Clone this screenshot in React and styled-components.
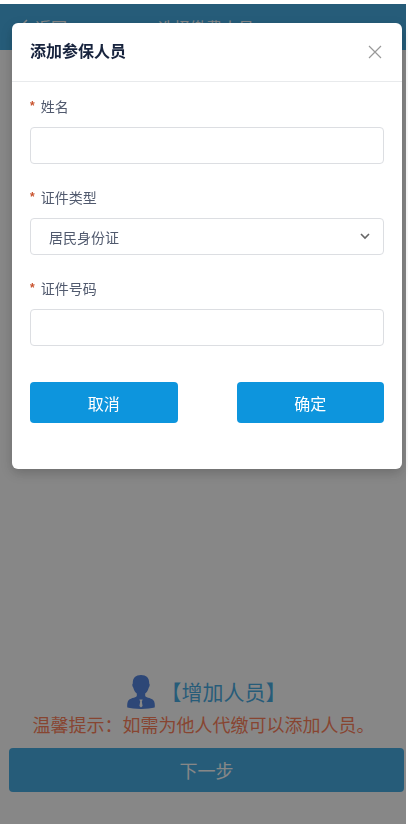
import React, { useState } from 'react';
import styled, { createGlobalStyle } from 'styled-components';

const GlobalStyle = createGlobalStyle`
  * {
    box-sizing: border-box;
  }
  body {
    margin: 0;
    background: #fff;
    color: #515a6e;
  }
  body, button, input, select {
    font-family: "Noto Sans CJK SC", sans-serif;
  }
`;

const Page = styled.div`
  display: flex;
  flex-direction: column;
  min-height: 100vh;
  padding: 4px 2px 0 0;
`;

const Header = styled.header`
  display: grid;
  grid-template-columns: 1fr auto 1fr;
  align-items: center;
  height: 46px;
  padding: 0 12px 0 18px;
  background: #0d95dd;
  color: #fff;
`;

const BackButton = styled.button`
  display: flex;
  align-items: center;
  justify-self: start;
  gap: 6px;
  padding: 0;
  border: 0;
  background: none;
  color: inherit;
  font-size: 16px;
  line-height: 24px;
`;

const PageTitle = styled.h1`
  margin: 0;
  font-size: 16px;
  font-weight: 400;
  line-height: 24px;
`;

const Footer = styled.footer`
  display: flex;
  flex-direction: column;
  margin-top: auto;
  padding: 0 2px 32px 9px;
`;

const AddPerson = styled.button`
  display: flex;
  align-items: flex-start;
  justify-content: center;
  gap: 6px;
  height: 36px;
  padding: 0;
  border: 0;
  background: none;
  color: #0d95dd;
  font-size: 21px;
  line-height: 32px;
`;

const Tip = styled.p`
  margin: 0;
  padding-right: 6px;
  color: #ff5a2a;
  font-size: 18px;
  line-height: 26px;
  text-align: center;
  white-space: nowrap;
`;

const NextButton = styled.button`
  height: 44px;
  margin-top: 11px;
  border: 0;
  border-radius: 4px;
  background: #0d95dd;
  color: #fff;
  font-size: 18px;
  line-height: 24px;
`;

const Mask = styled.div`
  position: fixed;
  inset: 4px 2px 0 0;
  padding: 19px 4px 0 12px;
  background: rgba(55, 55, 55, 0.6);
`;

const Dialog = styled.section`
  border-radius: 6px;
  background: #fff;
  box-shadow: 0 4px 12px rgba(0, 0, 0, 0.2);
`;

const DialogHeader = styled.div`
  display: flex;
  align-items: center;
  justify-content: space-between;
  height: 59px;
  padding: 0 18px;
  border-bottom: 1px solid #e8eaec;
`;

const DialogTitle = styled.h2`
  margin: 0;
  padding-bottom: 4px;
  color: #17233d;
  font-size: 16px;
  font-weight: 700;
  line-height: 24px;
`;

const CloseButton = styled.button`
  display: flex;
  padding: 0;
  border: 0;
  background: none;
  color: #999;
`;

const Form = styled.form`
  padding: 10px 18px 46px;
`;

const Field = styled.div`
  margin-bottom: 19px;
`;

const Label = styled.label`
  display: flex;
  gap: 6px;
  margin-bottom: 7px;
  font-size: 14px;
  line-height: 28px;

  &::before {
    content: "*";
    color: #c9532e;
    font-family: "Liberation Sans", sans-serif;
    font-size: 12px;
    font-weight: 700;
  }
`;

const TextInput = styled.input`
  display: block;
  width: 100%;
  height: 37px;
  padding: 0 18px;
  border: 1px solid #dcdee2;
  border-radius: 4px;
  background: #fff;
  color: inherit;
  font-size: 14px;
`;

const SelectBox = styled.div`
  position: relative;

  svg {
    position: absolute;
    top: 15px;
    right: 14px;
    pointer-events: none;
  }
`;

const Select = styled(TextInput).attrs({ as: 'select' })`
  appearance: none;
`;

const Actions = styled.div`
  display: grid;
  grid-template-columns: 1fr 1fr;
  gap: 59px;
  margin-top: 36px;
`;

const ActionButton = styled.button`
  height: 41px;
  border: 0;
  border-radius: 4px;
  background: #0d95dd;
  color: #fff;
  font-size: 16px;
`;

const PersonIcon = () => (
  <svg width="28" height="34" viewBox="0 0 28 34" aria-hidden="true">
    <path
      fill="#1f5fd6"
      d="M14 0C8.500 0 5.600 3.200 5.800 8.400C5 8.800 5.200 11.400 6.200 12.400C7 15.400 8.200 17.200 9.800 18.600V21C8.600 23 2.400 22.800 .8 26.500C.1 28.500 0 31 .4 32.600C6 34.300 22 34.300 27.600 32.600C28 31 27.900 28.500 27.200 26.500C25.600 22.800 19.400 23 18.200 21V18.600C19.800 17.200 21 15.400 21.800 12.400C22.800 11.400 23 8.800 22.200 8.400C22.400 3.200 19.500 0 14 0Z"
    />
    <path fill="#fff" d="M12.300 24.500H15.700L14.800 26.600L15.600 31L14 32.500L12.400 31L13.200 26.600Z" />
  </svg>
);

const App = () => {
  const [open, setOpen] = useState(true);

  const handleSubmit = (event) => {
    event.preventDefault();
    setOpen(false);
  };

  return (
    <>
      <GlobalStyle />
      <Page>
        <Header>
          <BackButton type="button">
            <svg width="11" height="16" viewBox="0 0 11 16" fill="none" stroke="currentColor" strokeWidth="1.500">
              <path d="M9 1L2 8L9 15" />
            </svg>
            返回
          </BackButton>
          <PageTitle>选择缴费人员</PageTitle>
        </Header>
        <Footer>
          <AddPerson type="button" onClick={() => setOpen(true)}>
            <PersonIcon />
            【增加人员】
          </AddPerson>
          <Tip>温馨提示：如需为他人代缴可以添加人员。</Tip>
          <NextButton type="button">下一步</NextButton>
        </Footer>
      </Page>

      {open && (
        <Mask>
          <Dialog role="dialog" aria-modal="true" aria-labelledby="dialog-title">
            <DialogHeader>
              <DialogTitle id="dialog-title">添加参保人员</DialogTitle>
              <CloseButton type="button" aria-label="关闭" onClick={() => setOpen(false)}>
                <svg width="18" height="18" viewBox="0 0 18 18" fill="none" stroke="currentColor" strokeWidth="1.200">
                  <path d="M3 3L15 15M15 3L3 15" />
                </svg>
              </CloseButton>
            </DialogHeader>
            <Form onSubmit={handleSubmit}>
              <Field>
                <Label htmlFor="name">姓名</Label>
                <TextInput id="name" type="text" />
              </Field>
              <Field>
                <Label htmlFor="id-type">证件类型</Label>
                <SelectBox>
                  <Select id="id-type">
                    <option>居民身份证</option>
                  </Select>
                  <svg width="10" height="7" viewBox="0 0 10 7" fill="none" stroke="#666" strokeWidth="1.600">
                    <path d="M1 1L5 5L9 1" />
                  </svg>
                </SelectBox>
              </Field>
              <Field>
                <Label htmlFor="id-number">证件号码</Label>
                <TextInput id="id-number" type="text" />
              </Field>
              <Actions>
                <ActionButton type="button" onClick={() => setOpen(false)}>取消</ActionButton>
                <ActionButton type="submit">确定</ActionButton>
              </Actions>
            </Form>
          </Dialog>
        </Mask>
      )}
    </>
  );
};

export default App;
